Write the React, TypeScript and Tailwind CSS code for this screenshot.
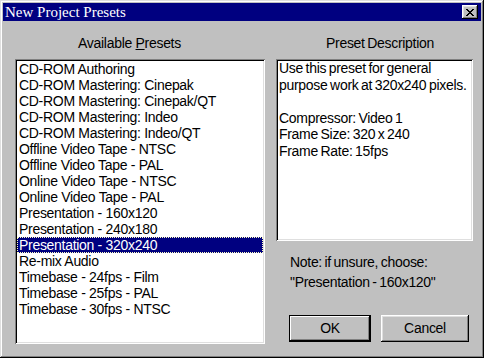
import React from "react";

const presets = [
  "CD-ROM Authoring",
  "CD-ROM Mastering: Cinepak",
  "CD-ROM Mastering: Cinepak/QT",
  "CD-ROM Mastering: Indeo",
  "CD-ROM Mastering: Indeo/QT",
  "Offline Video Tape - NTSC",
  "Offline Video Tape - PAL",
  "Online Video Tape - NTSC",
  "Online Video Tape - PAL",
  "Presentation - 160x120",
  "Presentation - 240x180",
  "Presentation - 320x240",
  "Re-mix Audio",
  "Timebase - 24fps - Film",
  "Timebase - 25fps - PAL",
  "Timebase - 30fps - NTSC",
];

const selected = "Presentation - 320x240";

const App = () => {
  return (
    <div className="w-[484px] h-[358px] bg-[#c0c0c0] p-[3px] flex flex-col font-['Liberation_Sans',Arial,sans-serif] text-[14px] tracking-[-0.3px] text-black shadow-[inset_-1px_-1px_#000,inset_1px_1px_#dfdfdf,inset_-2px_-2px_#808080,inset_2px_2px_#fff]">
      <div className="h-[18px] bg-[#000080] flex items-center justify-between pl-[2px] pr-[3px]">
        <span className="font-['Liberation_Serif',serif] text-[15px] tracking-normal text-white leading-none">
          New Project Presets
        </span>
        <button className="w-[16px] h-[14px] bg-[#c0c0c0] flex items-center justify-center shadow-[inset_-1px_-1px_#000,inset_1px_1px_#fff,inset_-2px_-2px_#808080,inset_2px_2px_#dfdfdf]">
          <svg width="8" height="7" viewBox="0 0 8 7" shapeRendering="crispEdges">
            <path d="M0 0h2v1h-2zM6 0h2v1h-2zM1 1h2v1h-2zM5 1h2v1h-2zM2 2h4v1h-4zM3 3h2v1h-2zM2 4h4v1h-4zM1 5h2v1h-2zM5 5h2v1h-2zM0 6h2v1h-2zM6 6h2v1h-2z" fill="#000" />
          </svg>
        </button>
      </div>

      <div className="flex pl-[12px] gap-[11px]">
        <div className="w-[250px] flex flex-col">
          <div className="h-[38px] pt-[14px] leading-[16px] text-center pr-[21px]">
            Available <span className="underline">P</span>resets
          </div>
          <div className="h-[285px] bg-white p-[2px] shadow-[inset_1px_1px_#808080,inset_-1px_-1px_#fff,inset_2px_2px_#000,inset_-2px_-2px_#dfdfdf]">
            {presets.map((p) => (
              <div
                key={p}
                className={
                  p === selected
                    ? "h-[16px] leading-[16px] pl-[2px] bg-[#000080] text-white outline outline-1 outline-dotted outline-[#ffffc0] -outline-offset-1"
                    : "h-[16px] leading-[16px] pl-[2px]"
                }
              >
                {p}
              </div>
            ))}
          </div>
        </div>

        <div className="w-[197px] flex flex-col [word-spacing:-1px]">
          <div className="h-[38px] pt-[14px] leading-[16px] text-center pl-[11px]">
            Preset Description
          </div>
          <div className="h-[182px] bg-white pl-[3px] pt-[1px] leading-[16.6px] shadow-[inset_1px_1px_#808080,inset_-1px_-1px_#fff,inset_2px_2px_#000,inset_-2px_-2px_#dfdfdf]">
            <div>Use this preset for general</div>
            <div>purpose work at 320x240 pixels.</div>
            <div>&nbsp;</div>
            <div>Compressor: Video 1</div>
            <div>Frame Size: 320 x 240</div>
            <div>Frame Rate: 15fps</div>
          </div>
          <div className="mt-[11px] pl-[14px] leading-[20px]">
            <div>Note: if unsure, choose:</div>
            <div>"Presentation - 160x120"</div>
          </div>
          <div className="mt-[23px] pl-[13px] flex gap-[10px] [word-spacing:0px]">
            <button className="w-[82px] h-[27px] bg-[#c0c0c0] shadow-[inset_0_0_0_1px_#000,inset_-2px_-2px_#000,inset_2px_2px_#fff,inset_-3px_-3px_#808080]">
              OK
            </button>
            <button className="w-[88px] h-[27px] bg-[#c0c0c0] shadow-[inset_-1px_-1px_#000,inset_1px_1px_#fff,inset_-2px_-2px_#808080,inset_2px_2px_#dfdfdf]">
              Cancel
            </button>
          </div>
        </div>
      </div>
    </div>
  );
};

export default App;
